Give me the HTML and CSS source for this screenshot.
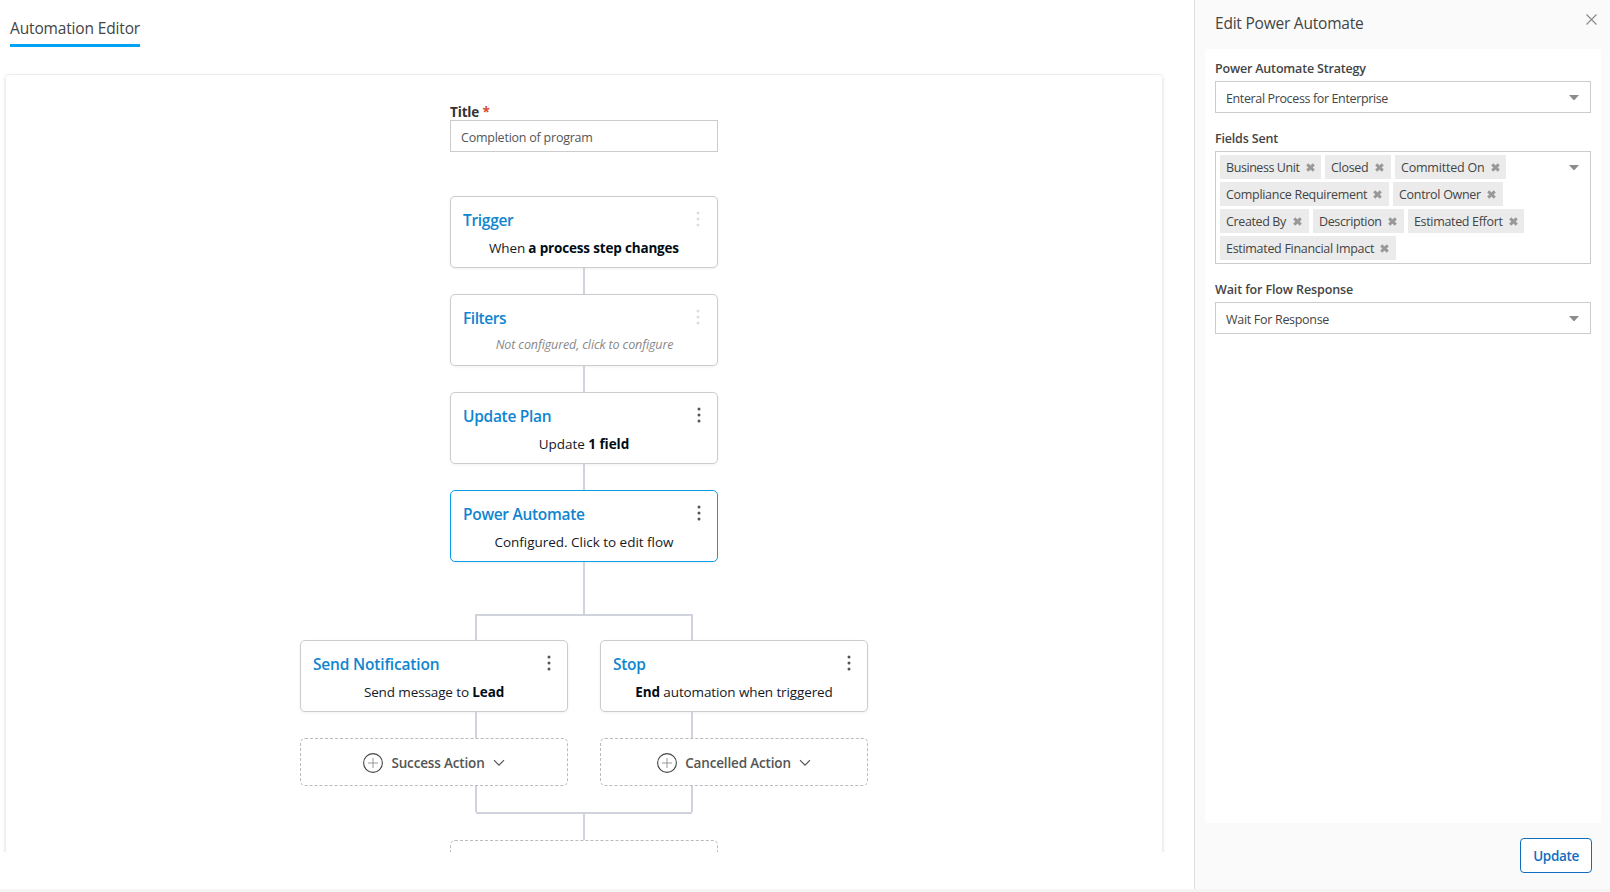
FILE: index.html
```
<!doctype html>
<html lang="en">
  <head>
    <meta charset="UTF-8" />
    <meta name="viewport" content="width=device-width, initial-scale=1.0" />
    <title>Automation Editor</title>
    <link rel="stylesheet" href="styles.css" />
  </head>

  <body>
    <!-- shared icons -->
    <svg class="sprite">
      <symbol id="dots" viewBox="0 0 4 16">
        <circle cx="2" cy="2" r="1.5" />
        <circle cx="2" cy="8" r="1.5" />
        <circle cx="2" cy="14" r="1.5" />
      </symbol>
      <symbol id="plus" viewBox="0 0 20 20">
        <circle cx="10" cy="10" r="9.4" fill="none" stroke="#444" stroke-width="1.1" />
        <path d="M5 10h10M10 5v10" fill="none" stroke="#999" />
      </symbol>
      <symbol id="chevron" viewBox="0 0 12 8">
        <path d="M1 1.2l5 5 5-5" fill="none" stroke="#555" stroke-width="1.2" />
      </symbol>
      <symbol id="times" viewBox="0 0 9 9">
        <path d="M1.2 1.4l6.6 6.2M7.8 1.4L1.2 7.6" fill="none" stroke="#999" stroke-width="2.9" />
      </symbol>
      <symbol id="caret" viewBox="0 0 10 5">
        <path d="M0 0h10L5.5 5h-1z" fill="#8c8c8c" />
      </symbol>
    </svg>

    <div class="app">
      <main class="editor">
        <div class="tabs">
          <span class="tab">Automation Editor</span>
        </div>

        <div class="canvas-wrap">
          <div class="canvas">
            <label class="title-label">Title <span class="required">*</span></label>
            <div class="title-input">Completion of program</div>

            <div class="node">
              <div class="node-header">
                <span class="node-name">Trigger</span>
                <svg class="dots disabled"><use href="#dots" /></svg>
              </div>
              <div class="node-text process">When <b>a process step changes</b></div>
            </div>
            <div class="line"></div>
            <div class="node">
              <div class="node-header">
                <span class="node-name filters">Filters</span>
                <svg class="dots disabled"><use href="#dots" /></svg>
              </div>
              <div class="node-text empty">Not configured, click to configure</div>
            </div>
            <div class="line"></div>
            <div class="node">
              <div class="node-header">
                <span class="node-name">Update Plan</span>
                <svg class="dots"><use href="#dots" /></svg>
              </div>
              <div class="node-text update-plan">Update <b>1 field</b></div>
            </div>
            <div class="line"></div>
            <div class="node active">
              <div class="node-header">
                <span class="node-name">Power Automate</span>
                <svg class="dots"><use href="#dots" /></svg>
              </div>
              <div class="node-text configured">Configured. Click to edit flow</div>
            </div>
            <div class="line long"></div>

            <div class="legs fork"></div>
            <div class="branches">
              <div class="node">
                <div class="node-header">
                  <span class="node-name notification">Send Notification</span>
                  <svg class="dots"><use href="#dots" /></svg>
                </div>
                <div class="node-text">Send message to <b>Lead</b></div>
              </div>
              <div class="node">
                <div class="node-header">
                  <span class="node-name">Stop</span>
                  <svg class="dots"><use href="#dots" /></svg>
                </div>
                <div class="node-text">
                  <b>End</b> automation when triggered
                </div>
              </div>
            </div>
            <div class="legs"></div>
            <div class="branches">
              <div class="add-action">
                <svg class="plus"><use href="#plus" /></svg>
                <span>Success Action</span>
                <svg class="chevron"><use href="#chevron" /></svg>
              </div>
              <div class="add-action">
                <svg class="plus"><use href="#plus" /></svg>
                <span>Cancelled Action</span>
                <svg class="chevron"><use href="#chevron" /></svg>
              </div>
            </div>
            <div class="legs"></div>
            <div class="join"></div>
            <div class="line"></div>
            <div class="add-action"></div>
          </div>
        </div>
      </main>

      <aside class="panel">
        <div class="panel-header">
          <span class="panel-title">Edit Power Automate</span>
          <svg class="close" viewBox="0 0 11 11">
            <path d="M.5 .5l10 10M10.5 .5l-10 10" fill="none" stroke="#888" stroke-width="1.1" />
          </svg>
        </div>

        <div class="panel-body">
          <div class="field">
            <label>Power Automate Strategy</label>
            <div class="select">
              <span class="strategy">Enteral Process for Enterprise</span>
              <svg class="caret"><use href="#caret" /></svg>
            </div>
          </div>
          <div class="field">
            <label>Fields Sent</label>
            <div class="multi-select">
              <div class="chips">
                <span class="chip business">Business Unit <svg><use href="#times" /></svg></span>
                <span class="chip closed">Closed <svg><use href="#times" /></svg></span>
                <span class="chip committed">Committed On <svg><use href="#times" /></svg></span>
                <span class="chip compliance">Compliance Requirement <svg><use href="#times" /></svg></span>
                <span class="chip owner">Control Owner <svg><use href="#times" /></svg></span>
                <span class="chip created">Created By <svg><use href="#times" /></svg></span>
                <span class="chip description">Description <svg><use href="#times" /></svg></span>
                <span class="chip effort">Estimated Effort <svg><use href="#times" /></svg></span>
                <span class="chip impact">Estimated Financial Impact <svg><use href="#times" /></svg></span>
              </div>
              <svg class="caret"><use href="#caret" /></svg>
            </div>
          </div>
          <div class="field">
            <label class="wait">Wait for Flow Response</label>
            <div class="select">
              <span>Wait For Response</span>
              <svg class="caret"><use href="#caret" /></svg>
            </div>
          </div>
        </div>

        <div class="panel-footer">
          <button class="update">Update</button>
        </div>
      </aside>
    </div>
  </body>
</html>
```
FILE: styles.css
```
* {
  box-sizing: border-box;
}

body {
  margin: 0;
  height: 892px;
  overflow: hidden;
  background-color: #f5f5f5;
  font-family: "Open Sans", "Noto Sans", sans-serif;
  font-size: 13.5px;
  color: #444;
}

svg {
  display: block;
  flex: none;
}

.sprite {
  display: none;
}

.app {
  display: flex;
  height: 889px;
  background-color: #fff;
}

/* editor */
.editor {
  width: 1194px;
}

.tabs {
  display: flex;
  height: 72px;
  padding: 16px 0 0 10px;
}

.tab {
  height: 31px;
  border-bottom: 3px solid #00a2f3;
  font-size: 15.5px;
  line-height: 24px;
  letter-spacing: -0.15px;
}

.canvas-wrap {
  height: 780px;
  padding: 2px 32px 0 6px;
  overflow: hidden;
}

.canvas {
  display: flex;
  flex-direction: column;
  align-items: center;
  height: 900px;
  padding-top: 28px;
  border-top: 1px solid #eee;
  border-radius: 3px;
  box-shadow: 0 2px 4px rgba(0, 0, 0, 0.18);
}

.title-label {
  width: 268px;
  font-weight: 700;
  line-height: 18px;
  letter-spacing: -0.15px;
  color: #333;
}

.required {
  color: #d9482f;
}

.title-input {
  width: 268px;
  height: 32px;
  flex: none;
  margin: -1px 0 44px;
  padding: 2px 10px 0;
  border: 1px solid #ccc;
  font-size: 12.5px;
  line-height: 30px;
  letter-spacing: -0.23px;
  color: #555;
}

.node {
  width: 268px;
  height: 72px;
  flex: none;
  padding: 12px 12px 0;
  border: 1px solid #ccc;
  border-radius: 5px;
  background-color: #fff;
  box-shadow: 0 1px 3px rgba(0, 0, 0, 0.06);
}

.node.active {
  border-color: #0a9fe8;
}

.node-header {
  display: flex;
  justify-content: space-between;
  align-items: flex-start;
  height: 22px;
}

.node-name {
  font-size: 15.5px;
  font-weight: 600;
  line-height: 22px;
  letter-spacing: -0.3px;
  color: #1085cf;
}

.node-name.filters {
  letter-spacing: -0.45px;
}

.node-name.notification {
  letter-spacing: -0.18px;
}

.dots {
  width: 4px;
  height: 16px;
  margin: 2px 4px 0 0;
  fill: #555;
}

.dots.disabled {
  margin-right: 5px;
  fill: #ddd;
}

.node-text {
  margin-top: 7px;
  line-height: 20px;
  letter-spacing: -0.12px;
  text-align: center;
  color: #14191f;
}

.node-text b {
  color: #000c14;
}

.node-text.process {
  letter-spacing: -0.17px;
}

.node-text.update-plan {
  letter-spacing: -0.04px;
}

.node-text.configured {
  letter-spacing: -0.03px;
}

.node-text.empty {
  margin-top: 6px;
  padding-left: 1px;
  font-size: 12.5px;
  font-style: italic;
  letter-spacing: -0.12px;
  color: #888;
}

/* connectors */
.line {
  width: 2px;
  height: 26px;
  flex: none;
  background-color: #d0d3dc;
}

.line.long {
  height: 52px;
}

.legs {
  width: 218px;
  height: 26px;
  flex: none;
  border: solid #d0d3dc;
  border-width: 0 2px;
}

.legs.fork {
  border-top-width: 2px;
}

.join {
  width: 216px;
  height: 2px;
  flex: none;
  background-color: #d0d3dc;
}

.branches {
  display: flex;
  gap: 32px;
}

.add-action {
  display: flex;
  justify-content: center;
  align-items: center;
  width: 268px;
  height: 48px;
  flex: none;
  padding-top: 2px;
  border: 1px dashed #bbb;
  border-radius: 5px;
  font-weight: 600;
  letter-spacing: -0.16px;
  color: #555;
}

.plus {
  width: 20px;
  height: 20px;
  margin-right: 8px;
}

.chevron {
  width: 12px;
  height: 8px;
  margin-left: 8px;
}

/* side panel */
.panel {
  display: flex;
  flex-direction: column;
  width: 416px;
  padding: 0 9px 0 10px;
  border-left: 1px solid #ddd;
  background-color: #fafafa;
}

.panel-header {
  display: flex;
  justify-content: space-between;
  height: 49px;
  padding: 11px 4px 0 10px;
}

.panel-title {
  font-size: 15.5px;
  line-height: 24px;
  letter-spacing: -0.22px;
}

.close {
  width: 11px;
  height: 11px;
  margin-top: 3px;
}

.panel-body {
  display: flex;
  flex-direction: column;
  gap: 17px;
  height: 774px;
  padding: 11px 10px;
  background-color: #fff;
}

.field {
  display: flex;
  flex-direction: column;
  gap: 3px;
  font-size: 12.5px;
}

.field label {
  font-weight: 600;
  line-height: 18px;
  letter-spacing: -0.18px;
}

.field label.wait {
  letter-spacing: -0.12px;
}

.select {
  display: flex;
  justify-content: space-between;
  align-items: center;
  height: 32px;
  padding: 0 11px 0 10px;
  border: 1px solid #ccc;
  letter-spacing: -0.3px;
}

.select span {
  padding-top: 2px;
}

.select .strategy {
  letter-spacing: -0.37px;
}

.caret {
  width: 10px;
  height: 5px;
}

.multi-select {
  display: flex;
  justify-content: space-between;
  height: 113px;
  padding: 3px 11px 0 4px;
  border: 1px solid #ccc;
}

.multi-select .caret {
  margin-top: 10px;
}

.chips {
  display: flex;
  flex-wrap: wrap;
  align-content: flex-start;
  gap: 3px 4px;
  width: 320px;
}

.chip {
  display: flex;
  justify-content: space-between;
  align-items: center;
  height: 24px;
  padding: 0 7px 0 6px;
  background-color: #ebebeb;
  letter-spacing: -0.3px;
  white-space: nowrap;
}

.chip svg {
  width: 9px;
  height: 9px;
}

.chip.business {
  width: 101px;
  padding-right: 6px;
  letter-spacing: -0.43px;
}

.chip.closed {
  width: 66px;
}

.chip.committed {
  width: 111px;
  padding-right: 6px;
  letter-spacing: -0.2px;
}

.chip.compliance {
  width: 169px;
}

.chip.owner {
  width: 110px;
}

.chip.created {
  width: 89px;
  letter-spacing: -0.37px;
}

.chip.description {
  width: 91px;
  letter-spacing: -0.38px;
}

.chip.effort {
  width: 116px;
  padding-right: 6px;
  letter-spacing: -0.33px;
}

.chip.impact {
  width: 176px;
}

.panel-footer {
  display: flex;
  justify-content: flex-end;
  padding: 15px 9px 0 0;
}

.update {
  width: 72px;
  height: 35px;
  padding: 1px 0 0;
  border: 1px solid #106ebe;
  border-radius: 4px;
  background-color: #fff;
  font-family: inherit;
  font-size: 13.5px;
  font-weight: 600;
  letter-spacing: -0.35px;
  color: #106ebe;
}
```
